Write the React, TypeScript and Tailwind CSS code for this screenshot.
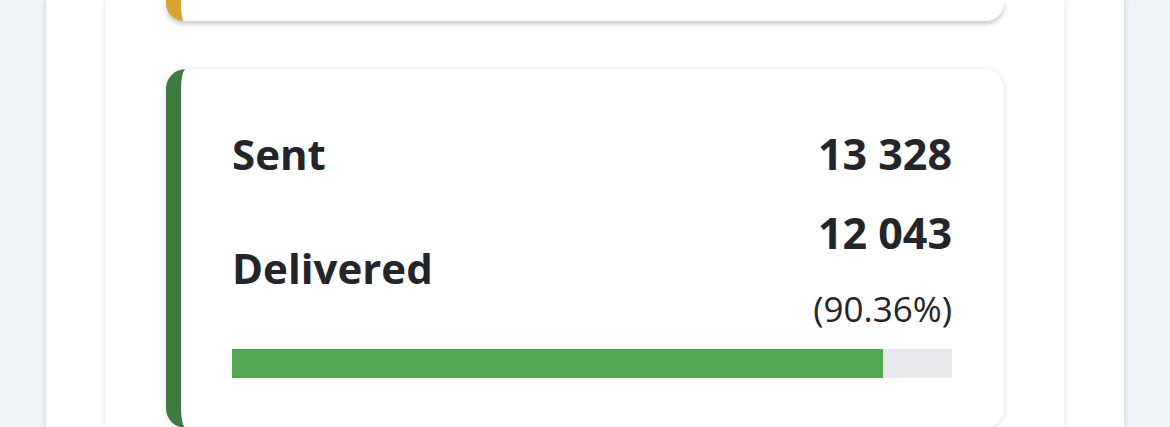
import React from 'react';

const stats = {
  sent: '13 328',
  delivered: '12 043',
  rate: 90.36,
};

export default function App() {
  return (
    <div
      className="h-[427px] overflow-hidden bg-[#f2f3f7] px-[46px]"
      style={{ fontFamily: '"Open Sans", "Liberation Sans", sans-serif' }}
    >
      <div className="h-full bg-white px-[60px] shadow-[0_0_6px_rgba(0,0,0,0.18)]">
        <div className="h-full bg-white px-[60px] shadow-[0_0_8px_rgba(0,0,0,0.12)]">
          {/* previous card, only its bottom edge is visible */}
          <div className="h-[21px] rounded-b-[18px] border-l-[15px] border-[#d4a62f] bg-white shadow-[0_3px_5px_rgba(0,0,0,0.22)]" />

          {/* delivery card */}
          <div className="mt-[48px] rounded-[20px] border-l-[15px] border-[#3e7c3e] bg-white pb-[50px] pl-[51px] pr-[52px] pt-[57px] text-[#23252a] shadow-[0_1px_6px_rgba(0,0,0,0.14)]">
            <div className="flex items-center justify-between">
              <span className="text-[42px] font-bold leading-[56px]">Sent</span>
              <span className="text-[43px] font-bold leading-[56px]">{stats.sent}</span>
            </div>
            <div className="mt-[23px] flex items-center justify-between">
              <span className="text-[42px] font-bold leading-[56px]">Delivered</span>
              <div className="flex flex-col items-end">
                <span className="text-[43px] font-bold leading-[56px]">{stats.delivered}</span>
                <span className="mt-[26px] text-[35px] leading-[44px]">({stats.rate.toFixed(2)}%)</span>
              </div>
            </div>
            <div className="mt-[18px] h-[29px] bg-[#e9e9ec]">
              <div className="h-full bg-[#52a552]" style={{ width: `${stats.rate}%` }} />
            </div>
          </div>
        </div>
      </div>
    </div>
  );
}
